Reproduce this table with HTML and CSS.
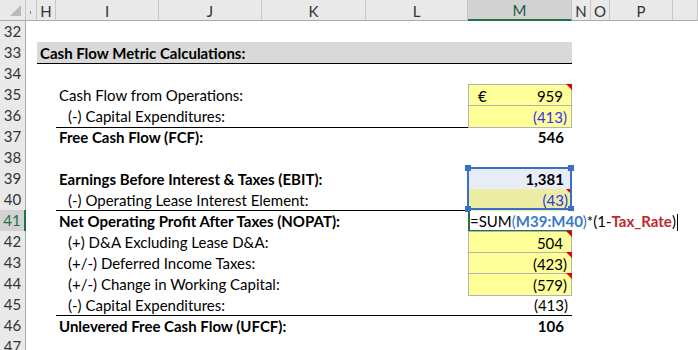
FILE: index.html
```html
<!DOCTYPE html>
<html>
<head>
<meta charset="utf-8">
<link rel="stylesheet" href="styles.css">
</head>
<body>
<div class="sheet">
  <div class="colbar">
    <div class="corner"><span class="tri"></span></div>
    <div class="ch narrow"><span class="gdot"></span></div>
    <div class="ch">H</div>
    <div class="ch">I</div>
    <div class="ch">J</div>
    <div class="ch">K</div>
    <div class="ch">L</div>
    <div class="ch sel">M</div>
    <div class="ch">N</div>
    <div class="ch">O</div>
    <div class="ch">P</div>
    <div class="ch"></div>
  </div>

  <div class="row"><div class="rh">32</div></div>
  <div class="row">
    <div class="rh">33</div>
    <div class="band">Cash Flow Metric Calculations:</div>
  </div>
  <div class="row"><div class="rh">34</div></div>
  <div class="row">
    <div class="rh">35</div>
    <div class="lbl">Cash Flow from Operations:</div>
    <div class="val input first note split"><span>€</span><span class="pos">959</span></div>
  </div>
  <div class="row">
    <div class="rh">36</div>
    <div class="lbl ind ul">(-) Capital Expenditures:</div>
    <div class="val input last blue">(413)</div>
  </div>
  <div class="row">
    <div class="rh">37</div>
    <div class="lbl b">Free Cash Flow (FCF):</div>
    <div class="val b"><span class="pos">546</span></div>
  </div>
  <div class="row"><div class="rh">38</div></div>
  <div class="row">
    <div class="rh">39</div>
    <div class="lbl b">Earnings Before Interest &amp; Taxes (EBIT):</div>
    <div class="val b ref-top">
      <span class="pos">1,381</span>
      <div class="range">
        <i class="h tl"></i><i class="h tr"></i><i class="h bl"></i><i class="h br"></i>
      </div>
    </div>
  </div>
  <div class="row">
    <div class="rh">40</div>
    <div class="lbl ind ul">(-) Operating Lease Interest Element:</div>
    <div class="val ref-bot note blue">(43)</div>
  </div>
  <div class="row">
    <div class="rh active">41</div>
    <div class="lbl b">Net Operating Profit After Taxes (NOPAT):</div>
    <div class="val editing">
      <div class="editor">=SUM<span class="par">(</span><span class="rf">M39:M40</span><span class="par">)</span>*(1-<span class="nm">Tax_Rate</span>)<span class="caret"></span></div>
    </div>
  </div>
  <div class="row">
    <div class="rh">42</div>
    <div class="lbl ind">(+) D&amp;A Excluding Lease D&amp;A:</div>
    <div class="val input first note"><span class="pos">504</span></div>
  </div>
  <div class="row">
    <div class="rh">43</div>
    <div class="lbl ind">(+/-) Deferred Income Taxes:</div>
    <div class="val input note">(423)</div>
  </div>
  <div class="row">
    <div class="rh">44</div>
    <div class="lbl ind">(+/-) Change in Working Capital:</div>
    <div class="val input last note">(579)</div>
  </div>
  <div class="row">
    <div class="rh">45</div>
    <div class="lbl ind ul">(-) Capital Expenditures:</div>
    <div class="val ul">(413)</div>
  </div>
  <div class="row">
    <div class="rh">46</div>
    <div class="lbl b">Unlevered Free Cash Flow (UFCF):</div>
    <div class="val b"><span class="pos">106</span></div>
  </div>
  <div class="row"><div class="rh">47</div></div>
</div>
</body>
</html>
```
FILE: styles.css
```css
* { box-sizing: border-box; }

body {
  margin: 0;
  background: #fff;
  font-family: Lato, "Liberation Sans", sans-serif;
  color: #000;
}

.sheet {
  width: 698px;
  height: 350px;
  overflow: hidden;
}

/* column header bar */
.colbar {
  display: grid;
  grid-template-columns: 26px 11px 19px 103px 103px 104px 102px 104px 19px 19px 63px 25px;
  height: 21px;
}

.corner {
  background: #e9e9e9;
  border-right: 1px solid #c6c6c6;
  border-bottom: 1px solid #ababab;
  display: flex;
  justify-content: flex-end;
  align-items: flex-end;
  padding: 0 4px 4px 0;
}

.corner .tri {
  width: 0;
  height: 0;
  border-left: 11px solid transparent;
  border-bottom: 11px solid #b9b9b9;
}

.ch {
  background: #e9e9e9;
  border-right: 1px solid #c6c6c6;
  border-bottom: 1px solid #ababab;
  display: flex;
  align-items: center;
  justify-content: center;
  font-size: 15px;
  color: #333;
  padding-top: 1px;
}

.ch.narrow { justify-content: flex-start; padding-left: 4px; }

.gdot {
  width: 1px;
  height: 3px;
  margin-top: 4px;
  background: #4a9a86;
}

.ch.sel {
  background: #d2d2d2;
  color: #1d5a45;
  border-bottom: 2px solid #217346;
}

/* grid rows */
.row {
  display: grid;
  grid-template-columns: 26px 11px 19px 412px 104px 126px;
  height: 21px;
  font-size: 15px;
  line-height: 20px;
}

.rh {
  grid-column: 1;
  background: #e9e9e9;
  border-right: 1px solid #ababab;
  border-bottom: 1px solid #d4d4d4;
  font-size: 15px;
  color: #333;
  text-align: center;
  line-height: 21px;
}

.rh.active {
  background: #d2d2d2;
  color: #217346;
  border-right: 2px solid #217346;
}

.band {
  grid-column: 3 / 6;
  background: #d9d9d9;
  border-bottom: 1px solid #000;
  font-weight: 700;
  padding: 1px 0 0 3px;
}

.lbl {
  grid-column: 4;
  padding: 1px 0 0 3px;
  white-space: nowrap;
}

.lbl.ind { padding-left: 12px; }

.b { font-weight: 700; }

.ul { border-bottom: 1px solid #000; }

.val {
  grid-column: 5;
  position: relative;
  text-align: right;
  padding: 1px 4px 0 9px;
  white-space: nowrap;
}

.val.split {
  display: flex;
  justify-content: space-between;
}

/* space reserved for the closing parenthesis, like the _) number format */
.pos::after {
  content: ")";
  visibility: hidden;
}

.blue { color: #3232e6; }

/* yellow input cells */
.input {
  background: #ffff99;
  border-left: 1px solid #b2b2b2;
  border-right: 1px solid #b2b2b2;
  border-top: 1px solid #b2b2b2;
}

.input.last { border-bottom: 1px solid #b2b2b2; }

/* comment indicator */
.note::after {
  content: "";
  position: absolute;
  top: 0;
  right: 0;
  width: 0;
  height: 0;
  border-top: 6px solid #e00000;
  border-left: 6px solid transparent;
}

.input.note::after { top: -1px; right: -1px; }

/* referenced range M39:M40 */
.ref-top { background: #e7ecf6; }
.ref-bot { background: #ebeea2; }

.range {
  position: absolute;
  left: -1px;
  top: -1px;
  width: 105px;
  height: 43px;
  border: 2px solid #3b6fc6;
  z-index: 2;
}

.range .h {
  position: absolute;
  width: 6px;
  height: 6px;
  background: #3b6fc6;
}

.range .tl { left: -4px; top: -4px; }
.range .tr { right: -4px; top: -4px; }
.range .bl { left: -4px; bottom: -4px; }
.range .br { right: -4px; bottom: -4px; }

/* active cell in edit mode */
.editing {
  box-shadow: inset 2px 0 0 #217346, inset 0 -2px 0 #217346, inset -2px 0 0 #217346;
  padding: 0;
}

.editor {
  position: absolute;
  left: 2px;
  top: 1px;
  z-index: 3;
  height: 19px;
  padding: 0 2px 0 0;
  background: #fff;
  text-align: left;
  white-space: nowrap;
  line-height: 20px;
}

.editor .rf { color: #3a78c9; font-weight: 700; }
.editor .par { color: #3a78c9; }
.editor .nm { color: #c0282d; font-weight: 700; }

.caret {
  display: inline-block;
  width: 1px;
  height: 17px;
  background: #000;
  margin-left: 1px;
  vertical-align: -4px;
}
```
